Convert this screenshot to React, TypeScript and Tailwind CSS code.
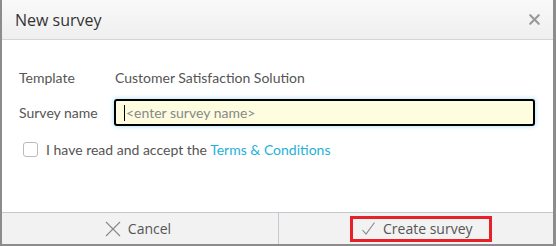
import { X } from 'lucide-react';

export default function App() {
  return (
    <div className="h-[246px] w-[556px] bg-[#8c8c8c] pl-[2px] pr-[3px] pb-[2px]">
      <div className="flex h-full flex-col bg-white font-['Lato',sans-serif] text-[#555]">
        <div className="flex h-[40px] items-center justify-between border-b border-[#d6d6d6] bg-gradient-to-b from-[#f9f9f9] to-[#efefef] pl-[13px] pr-[10px]">
          <span className="font-['Open_Sans',sans-serif] text-[16px] text-[#333]">New survey</span>
          <X className="h-[17px] w-[17px] text-[#999]" strokeWidth={3} />
        </div>
        <div className="flex-1 px-[17px] pt-[27px]">
          <div className="flex items-center text-[14px]">
            <span className="w-[96px]">Template</span>
            <span>Customer Satisfaction Solution</span>
          </div>
          <div className="mt-[11px] flex items-center text-[14px]">
            <span className="w-[95px]">Survey name</span>
            <div className="mr-[1px] flex h-[27px] flex-1 items-center rounded-[3px] border-2 border-black bg-[#fffddf] pl-[8px] shadow-[0_0_4px_1px_#bfe6fb]">
              <span className="mr-[1px] h-[16px] w-px bg-black" />
              <span className="text-[#888]">&lt;enter survey name&gt;</span>
            </div>
          </div>
          <div className="mt-[13px] flex items-center pl-[4px] text-[14px]">
            <span className="mr-[8px] h-[15px] w-[15px] rounded-[3px] border border-[#bbb]" />
            <span>
              I have read and accept the <span className="text-[#1eb1d8]">Terms &amp; Conditions</span>
            </span>
          </div>
        </div>
        <div className="flex h-[32px] border-t border-[#c7c7cf] bg-[#f2f2f2] font-['Open_Sans',sans-serif] text-[14px] text-[#555]">
          <div className="flex w-[277px] items-center justify-center gap-[7px] border-r border-[#c7c7cf] pr-[4px]">
            <svg width="16" height="16" viewBox="0 0 16 16" className="text-[#888]">
              <path d="M1 1 L15 15 M15 1 L1 15" stroke="currentColor" strokeWidth="1.1" fill="none" />
            </svg>
            <span>Cancel</span>
          </div>
          <div className="flex flex-1 items-center pl-[71px]">
            <div className="flex h-[26px] w-[142px] items-center gap-[8px] border-[3px] border-[#e8202a] pl-[9px]">
              <svg width="13" height="13" viewBox="0 0 13 13" className="text-[#888]">
                <path d="M0.5 8 L4 12 L12.5 0.5" stroke="currentColor" strokeWidth="1.1" fill="none" />
              </svg>
              <span>Create survey</span>
            </div>
          </div>
        </div>
      </div>
    </div>
  );
}
